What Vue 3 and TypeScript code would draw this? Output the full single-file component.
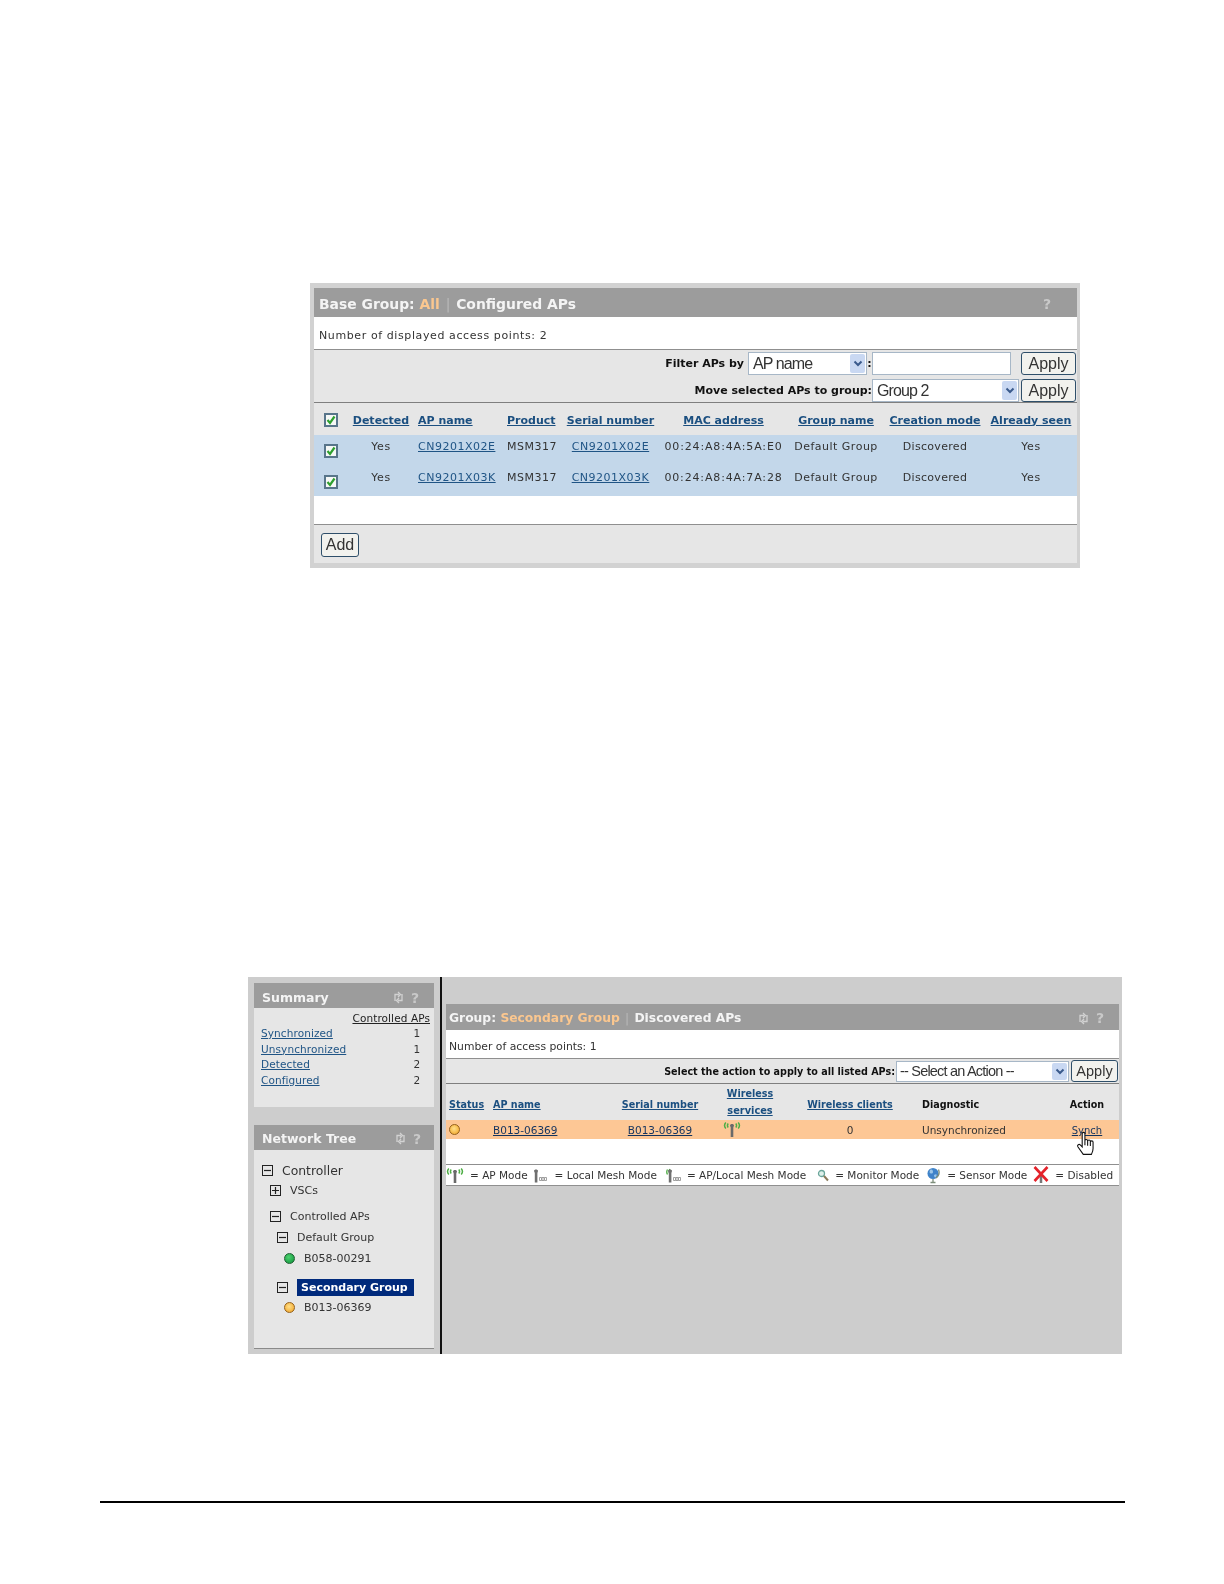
<script setup lang="ts">
interface ApRow { ap: string; mac: string }
const baseRows: ApRow[] = [
  { ap: 'CN9201X02E', mac: '00:24:A8:4A:5A:E0' },
  { ap: 'CN9201X03K', mac: '00:24:A8:4A:7A:28' },
]
const baseHeads = [
  { t: 'Detected', c: 'ctr' }, { t: 'AP name', c: 'lft' }, { t: 'Product', c: 'lft2' },
  { t: 'Serial number', c: 'ctr' }, { t: 'MAC address', c: 'ctr' }, { t: 'Group name', c: 'ctr' },
  { t: 'Creation mode', c: 'ctr' }, { t: 'Already seen', c: 'ctr' },
]
const summary = [
  { t: 'Synchronized', n: 1 }, { t: 'Unsynchronized', n: 1 }, { t: 'Detected', n: 2 }, { t: 'Configured', n: 2 },
]
interface TreeRow { t: string; ind: number; top: number; kind: 'minus' | 'plus' | 'green' | 'amber'; cls: string }
const tree: TreeRow[] = [
  { t: 'Controller', ind: 8, top: 12, kind: 'minus', cls: 'root' },
  { t: 'VSCs', ind: 16, top: 4, kind: 'plus', cls: '' },
  { t: 'Controlled APs', ind: 16, top: 10, kind: 'minus', cls: '' },
  { t: 'Default Group', ind: 23, top: 5, kind: 'minus', cls: '' },
  { t: 'B058-00291', ind: 30, top: 5, kind: 'green', cls: '' },
  { t: 'Secondary Group', ind: 23, top: 13, kind: 'minus', cls: 'sel-row' },
  { t: 'B013-06369', ind: 30, top: 4, kind: 'amber', cls: '' },
]
</script>

<template>
  <main class="page">
    <section class="panel-one">
      <header class="bar bar-big">
        <span>Base Group: <b class="hl">All</b> <i class="sep">|</i> Configured APs</span>
        <span class="q q-one">?</span>
      </header>
      <p class="count count-one">Number of displayed access points: 2</p>
      <div class="tools tools-one">
        <div class="tool-row">
          <b class="lbl">Filter APs by</b>
          <div class="sel sel-a">AP name<span class="arrow"><svg width="10" height="7" viewBox="0 0 10 7"><path d="M1.5 1.5 5 5l3.5-3.5" fill="none" stroke="#3a5a8c" stroke-width="2"/></svg></span></div>
          <b class="colon">:</b>
          <div class="inp"></div>
          <div class="btn btn-a">Apply</div>
        </div>
        <div class="tool-row tool-row-b">
          <b class="lbl">Move selected APs to group:</b>
          <div class="sel sel-b">Group 2<span class="arrow"><svg width="10" height="7" viewBox="0 0 10 7"><path d="M1.5 1.5 5 5l3.5-3.5" fill="none" stroke="#3a5a8c" stroke-width="2"/></svg></span></div>
          <div class="btn btn-b">Apply</div>
        </div>
      </div>
      <div class="grid-one head-one">
        <span class="chk-cell"><span class="chk"><svg width="10" height="10" viewBox="0 0 10 10"><path d="M1.5 5 4 8l4.5-6.5" fill="none" stroke="#2ea02e" stroke-width="2.2"/></svg></span></span>
        <a v-for="h in baseHeads" :key="h.t" class="th" :class="h.c">{{ h.t }}</a>
      </div>
      <div class="rows-one">
        <div v-for="r in baseRows" :key="r.ap" class="grid-one row-one">
          <span class="chk-cell chk-low"><span class="chk"><svg width="10" height="10" viewBox="0 0 10 10"><path d="M1.5 5 4 8l4.5-6.5" fill="none" stroke="#2ea02e" stroke-width="2.2"/></svg></span></span>
          <span class="td ctr">Yes</span>
          <a class="td lft link">{{ r.ap }}</a>
          <span class="td lft2">MSM317</span>
          <a class="td ctr link">{{ r.ap }}</a>
          <span class="td ctr mac">{{ r.mac }}</span>
          <span class="td ctr">Default Group</span>
          <span class="td ctr disc">Discovered</span>
          <span class="td ctr">Yes</span>
        </div>
      </div>
      <div class="blank-one"></div>
      <footer class="foot-one"><div class="btn btn-add">Add</div></footer>
    </section>

    <section class="panel-two">
      <aside class="side">
        <div class="card card-sum">
          <header class="bar bar-side">
            <span>Summary</span>
            <span class="bar-icons">
              <svg width="11" height="13" viewBox="0 0 11 13"><use href="#sync"/></svg>
              <span class="q">?</span>
            </span>
          </header>
          <div class="sum-body">
            <div class="sum-title"><span>Controlled APs</span></div>
            <div v-for="s in summary" :key="s.t" class="sum-row">
              <a class="link">{{ s.t }}</a><span class="sum-n">{{ s.n }}</span>
            </div>
          </div>
        </div>
        <div class="card card-tree">
          <header class="bar bar-side bar-tree">
            <span>Network Tree</span>
            <span class="bar-icons">
              <svg width="11" height="13" viewBox="0 0 11 13"><use href="#sync"/></svg>
              <span class="q">?</span>
            </span>
          </header>
          <div class="tree-body">
            <div v-for="n in tree" :key="n.t" class="tree-row" :class="n.cls" :style="{ marginTop: n.top + 'px', paddingLeft: n.ind + 'px' }">
              <span v-if="n.kind === 'minus' || n.kind === 'plus'" class="box">
                <svg width="9" height="9" viewBox="0 0 9 9"><path :d="n.kind === 'plus' ? 'M1 4.5h7M4.5 1v7' : 'M1 4.5h7'" stroke="#222" stroke-width="1.2"/></svg>
              </span>
              <span v-else class="dot" :class="n.kind"></span>
              <span class="tree-text">{{ n.t }}</span>
            </div>
          </div>
        </div>
      </aside>
      <div class="content">
        <div class="wrap-two">
          <header class="bar bar-mid">
            <span>Group: <b class="hl">Secondary Group</b> <i class="sep">|</i> Discovered APs</span>
            <span class="bar-icons">
              <svg width="11" height="13" viewBox="0 0 11 13"><use href="#sync"/></svg>
              <span class="q">?</span>
            </span>
          </header>
          <p class="count count-two">Number of access points: 1</p>
          <div class="tools tools-two">
            <b class="lbl">Select the action to apply to all listed APs:</b>
            <div class="sel sel-c">-- Select an Action --<span class="arrow"><svg width="10" height="7" viewBox="0 0 10 7"><path d="M1.5 1.5 5 5l3.5-3.5" fill="none" stroke="#3a5a8c" stroke-width="2"/></svg></span></div>
            <div class="btn btn-c">Apply</div>
          </div>
          <div class="grid-two head-two">
            <a class="th lft-s">Status</a>
            <a class="th lft">AP name</a>
            <a class="th ctr">Serial number</a>
            <span class="wl ctr"><a class="th">Wireless</a><a class="th th-sm">services</a></span>
            <a class="th ctr">Wireless clients</a>
            <b class="th-plain diag">Diagnostic</b>
            <b class="th-plain ctr act">Action</b>
          </div>
          <div class="grid-two row-two">
            <span class="status-cell"><span class="dot amber"></span></span>
            <a class="td lft link-dark">B013-06369</a>
            <a class="td ctr link-dark">B013-06369</a>
            <span class="ant-cell">
              <svg width="18" height="17" viewBox="0 0 18 17"><use href="#ant"/></svg>
            </span>
            <span class="td ctr">0</span>
            <span class="td diag">Unsynchronized</span>
            <span class="td ctr act synch">
              <a class="link-dark">Synch</a>
              <svg class="hand" width="20" height="25" viewBox="0 0 18 23"><path d="M5.500 2.500C5.500.8 8 .8 8 2.500V9c0-1.600 2.500-1.600 2.500 0v.5c0-1.600 2.500-1.600 2.500 0v.7c0-1.500 2.500-1.500 2.500 0V16c0 2-.5 3.500-1.500 5.500H6.500L1.500 14.500c-.9-1.500 1-2.800 2.200-1.700l1.800 1.900zM8 9v4M10.500 9.500v4M13 10.200v3.500" fill="#fff" stroke="#111" stroke-width="1"/></svg>
            </span>
          </div>
          <div class="blank-two"></div>
          <div class="legend">
            <svg class="lg-ant" width="18" height="17" viewBox="0 0 18 17"><use href="#ant"/></svg>
            <span class="lg-t1">= AP Mode</span>
            <svg class="lg-mesh" width="16" height="15" viewBox="0 0 16 15"><use href="#mesh"/></svg>
            <span class="lg-t2">= Local Mesh Mode</span>
            <svg class="lg-both" width="15" height="16" viewBox="0 0 15 16"><path d="M1.500 2.500q-1.500 2.500 0 5M3.800 2q-1.200 2.500 0 5" fill="none" stroke="#56b04c" stroke-width="1.400"/><use href="#mesh" y="1"/></svg>
            <span class="lg-t3">= AP/Local Mesh Mode</span>
            <svg class="lg-mag" width="12" height="13" viewBox="0 0 12 13"><circle cx="4.500" cy="4.500" r="3" fill="#dff0ea" stroke="#6aa59a" stroke-width="1.300"/><path d="m7 7 4 4.500" stroke="#8a7a5a" stroke-width="2"/></svg>
            <span class="lg-t4">= Monitor Mode</span>
            <svg class="lg-globe" width="15" height="17" viewBox="0 0 15 17"><circle cx="7" cy="6.500" r="5.500" fill="#3f83c9"/><path d="M4 3c2-1 3 0 3 2S4 7 3.500 5zM8 8c2-1 3-1 2.500 1S8 11 8 8z" fill="#9cc6e8"/><path d="M12.500 2.500q2 5-2.500 8.500M7 12v3M4.500 15.500h5" fill="none" stroke="#7e8f7c" stroke-width="1.300"/></svg>
            <span class="lg-t5">= Sensor Mode</span>
            <svg class="lg-x" width="16" height="18" viewBox="0 0 16 18"><path d="M8 8v9" stroke="#777" stroke-width="2.500"/><path d="M1.500 1 14.500 15M14.500 1 1.500 15" stroke="#e4222a" stroke-width="2.600"/></svg>
            <span class="lg-t6">= Disabled</span>
          </div>
        </div>
      </div>
    </section>
    <hr class="rule" />

    <svg class="defs" width="0" height="0" aria-hidden="true">
      <defs>
        <g id="ant">
          <path d="M2.800 1.500q-2.500 3 0 6M5.200 2.500q-1.500 2 0 4M12.800 2.500q1.500 2 0 4M15.200 1.500q2.500 3 0 6" fill="none" stroke="#4fae46" stroke-width="1.500"/>
          <path d="M7 4.500C7 2.500 11 2.500 11 4.500L10.300 6.500V16H7.700V6.500z" fill="#6a6a6a"/>
        </g>
        <g id="sync">
          <path d="M2 10V3.500h4M5 1l2.500 2.500L5 6M9 3v6.500H5M6 7 3.500 9.500 6 12" fill="none" stroke="#d2d2d2" stroke-width="1.300"/>
        </g>
        <g id="mesh">
          <path d="M2 3C2 1 6 1 6 3L5.400 5V14.500H2.800V5z" fill="#6f6f6f"/>
          <path d="M7.500 9.500h2v3h-2zM10 9.500h2v3h-2zM12.500 9.500h2v3h-2z" fill="none" stroke="#8a8a8a" stroke-width=".8"/>
        </g>
      </defs>
    </svg>
  </main>
</template>

<style>
body { background: #fff; }
</style>

<style scoped>
.page {
  width: 1224px;
  height: 1584px;
  overflow: hidden;
  background: #fff;
  font-family: "DejaVu Sans", Verdana, sans-serif;
  font-size: 11px;
  color: #333;
  display: flex;
  flex-direction: column;
  padding-top: 283px;
  box-sizing: border-box;
}
.defs { position: absolute; }
b { font-weight: 700; }
p { margin: 0; }
i { font-style: normal; }

.panel-one {
  margin-left: 310px;
  width: 770px;
  height: 285px;
  box-sizing: border-box;
  padding: 5px 3px 5px 4px;
  background: #d2d2d2;
  display: flex;
  flex-direction: column;
  flex: none;
  filter: blur(0.3px);
}
.bar {
  background: #9c9c9c;
  color: #f4f4f4;
  font-weight: 700;
  display: flex;
  align-items: center;
  justify-content: space-between;
  flex: none;
  box-sizing: border-box;
}
.hl { color: #fbc78f; }
.sep { color: #b9b9b9; font-weight: 400; padding: 0 1px; }
.bar-big { height: 29px; font-size: 13.900px; padding: 2px 26px 0 5px; }
.q { color: #c9c9c9; font-size: 14px; font-weight: 700; }
.count { background: #fff; color: #333; display: flex; align-items: center; flex: none; }
.count-one { height: 27px; padding: 5px 5px 0; border-bottom: 1px solid #8f8f8f; letter-spacing: 0.600px; }
.tools { background: #e6e6e6; color: #111; flex: none; }
.tools-one {
  height: 53px;
  box-sizing: border-box;
  border-bottom: 1px solid #7f7f7f;
  padding: 2px 1px 0 0;
  display: flex;
  flex-direction: column;
  gap: 4px;
}
.tool-row { display: flex; justify-content: flex-end; align-items: flex-start; height: 23px; }
.lbl { align-self: center; color: #111; }
.sel {
  position: relative;
  box-sizing: border-box;
  height: 23px;
  background: #fff;
  border: 1px solid #a7b7c7;
  font-family: "Liberation Sans", Arial, sans-serif;
  font-size: 16px;
  letter-spacing: -0.900px;
  line-height: 21px;
  padding-left: 4px;
  color: #333;
}
.arrow {
  position: absolute;
  right: 1px;
  top: 1px;
  bottom: 1px;
  width: 15px;
  background: #c9d8f2;
  border-radius: 2px;
  display: flex;
  align-items: center;
  justify-content: center;
}
.sel-a { width: 119px; margin-left: 4px; }
.colon { width: 5px; text-align: center; align-self: center; }
.inp { width: 139px; height: 23px; box-sizing: border-box; background: #fff; border: 1px solid #a7b7c7; }
.btn {
  box-sizing: border-box;
  height: 23px;
  border: 1px solid #2f4f6a;
  border-radius: 3px;
  background: #f2f2ee;
  font-family: "Liberation Sans", Arial, sans-serif;
  font-size: 16px;
  line-height: 21px;
  text-align: center;
  color: #333;
}
.btn-a { width: 55px; margin-left: 10px; }
.sel-b { width: 147px; }
.btn-b { width: 55px; margin-left: 2px; }

.grid-one {
  display: grid;
  grid-template-columns: 34px 66px 89px 58px 99px 127px 98px 100px 92px;
  flex: none;
}
.head-one { height: 32px; background: #e6e6e6; align-items: center; padding-top: 2px; box-sizing: border-box; }
.th { color: #1b4f80; font-weight: 700; text-decoration: underline; }
.th, .td { white-space: nowrap; }
.ctr { text-align: center; }
.lft { padding-left: 4px; }
.lft2 { padding-left: 4px; }
.chk-cell { display: flex; padding-left: 10px; }
.chk {
  width: 14px;
  height: 14px;
  box-sizing: border-box;
  border: 2px solid #58758a;
  background: #f6f8f6;
  display: flex;
  align-items: center;
  justify-content: center;
}
.rows-one { background: #c3d7ea; height: 61px; flex: none; }
.row-one { height: 31px; padding-top: 5px; box-sizing: border-box; line-height: 13px; }
.row-one:last-child { height: 30px; }
.row-one .td { letter-spacing: 0.500px; }
.row-one .mac { letter-spacing: 0.850px; }
.row-one .disc { letter-spacing: 0.300px; }
.chk-low { padding-top: 4px; }
.link { color: #1f5485; text-decoration: underline; }
.blank-one { height: 28px; background: #fff; border-bottom: 1px solid #8f8f8f; flex: none; }
.foot-one { flex: 1; background: #e6e6e6; padding: 8px 0 0 7px; }
.btn-add { width: 38px; height: 24px; }

.panel-two {
  margin-left: 248px;
  margin-top: 409px;
  width: 874px;
  height: 377px;
  background: #cdcdcd;
  display: flex;
  flex: none;
  filter: blur(0.3px);
}
.side { width: 192px; padding: 6px 6px 0; box-sizing: border-box; flex: none; }
.card { background: #e6e6e6; }
.bar-side { height: 25px; font-size: 12.500px; padding: 4px 15px 0 8px; }
.bar-tree { padding-top: 2px; padding-right: 13px; }
.bar-icons { display: inline-flex; align-items: center; gap: 7px; }
.sum-body { height: 99px; box-sizing: border-box; padding: 3px 4px 0 7px; font-size: 10.500px; letter-spacing: 0.100px; }
.sum-title { text-align: right; line-height: 15px; color: #222; }
.sum-title span { text-decoration: underline; }
.sum-row { display: flex; justify-content: space-between; line-height: 15.500px; }
.sum-n { width: 10px; margin-right: 8px; text-align: center; color: #333; }
.card-tree { margin-top: 18px; }
.tree-body { height: 199px; box-sizing: border-box; border-bottom: 1px solid #8a8a8a; overflow: hidden; padding-top: 0.100px; }
.tree-row { height: 16px; display: flex; align-items: center; gap: 9px; color: #333; }
.tree-row.root { font-size: 12.400px; }
.box {
  width: 11px;
  height: 11px;
  box-sizing: border-box;
  border: 1px solid #222;
  display: flex;
  align-items: center;
  justify-content: center;
  flex: none;
}
.box svg { flex: none; }
.dot {
  width: 11px;
  height: 11px;
  border-radius: 50%;
  box-sizing: border-box;
  flex: none;
  border: 1.500px solid #555;
}
.dot.green { background: radial-gradient(circle at 40% 35%, #4cd36e, #0d8f3a); border-color: #1d5e30; }
.dot.amber { background: radial-gradient(circle at 45% 40%, #ffe08a, #f0a020); border-color: #94601a; }
.sel-row .tree-text {
  background: #002a7c;
  color: #fff;
  font-weight: 700;
  padding: 0 4px;
  width: 109px;
  line-height: 17px;
}

.content {
  flex: 1;
  border-left: 2px solid #111;
  padding: 27px 3px 0 4px;
  box-sizing: border-box;
  min-width: 0;
}
.wrap-two { display: flex; flex-direction: column; font-size: 10.500px; }
.bar-mid { height: 26px; font-size: 12.300px; padding: 2px 15px 0 3px; }
.count-two { height: 24px; padding: 4px 3px 0; border-bottom: 1px solid #8f8f8f; font-size: 10.800px; }
.tools-two {
  height: 25px;
  box-sizing: border-box;
  border-bottom: 1px solid #7f7f7f;
  display: flex;
  justify-content: flex-end;
  align-items: center;
  padding-right: 1px;
}
.tools-two .lbl { font-size: 9.600px; }
.sel-c { width: 173px; height: 21px; line-height: 19px; font-size: 14.500px; letter-spacing: -0.800px; margin-left: 1px; padding-left: 3px; }
.btn-c { width: 47px; height: 22px; line-height: 20px; margin-left: 2px; font-size: 14.500px; }
.grid-two {
  display: grid;
  grid-template-columns: 43px 126px 90px 90px 110px 155px 59px;
  flex: none;
}
.head-two { height: 36px; background: #e6e6e6; align-items: center; padding-top: 5px; box-sizing: border-box; font-size: 9.600px; }
.lft-s { padding-left: 3px; }
.wl { display: flex; flex-direction: column; align-items: center; gap: 4px; line-height: 13px; margin-top: -6px; }
.th-sm { font-size: 9.800px; }
.th-plain { color: #111; white-space: nowrap; }
.diag { padding-left: 17px; }
.act { padding-right: 5px; }
.row-two { height: 19px; background: #fdc795; align-items: center; color: #333; line-height: 13px; padding-top: 2px; box-sizing: border-box; }
.link-dark { color: #14335e; text-decoration: underline; }
.status-cell { display: flex; padding: 0 0 0 3px; margin-top: -3px; }
.ant-cell { display: flex; padding-left: 18px; height: 17px; margin-top: -2px; }
.synch { position: relative; font-size: 10px; }
.hand { position: absolute; left: 16px; top: 7px; z-index: 2; }
.blank-two { height: 25px; background: #fff; border-bottom: 1px solid #8f8f8f; flex: none; }
.legend {
  height: 20px;
  background: #fff;
  border-bottom: 1px solid #8f8f8f;
  display: flex;
  align-items: center;
  white-space: nowrap;
  color: #333;
}
.legend svg { flex: none; }
.lg-t1 { margin-left: 6px; }
.lg-mesh { margin-left: 4px; }
.lg-t2 { margin-left: 7px; }
.lg-both { margin-left: 9px; }
.lg-t3 { margin-left: 6px; }
.lg-mag { margin-left: 11px; }
.lg-t4 { margin-left: 6px; }
.lg-globe { margin-left: 7px; }
.lg-t5 { margin-left: 6px; }
.lg-x { margin-left: 6px; }
.lg-t6 { margin-left: 6px; }

.rule {
  margin: 147px 0 0 100px;
  width: 1025px;
  height: 2px;
  border: 0;
  background: #000;
  flex: none;
}
</style>
